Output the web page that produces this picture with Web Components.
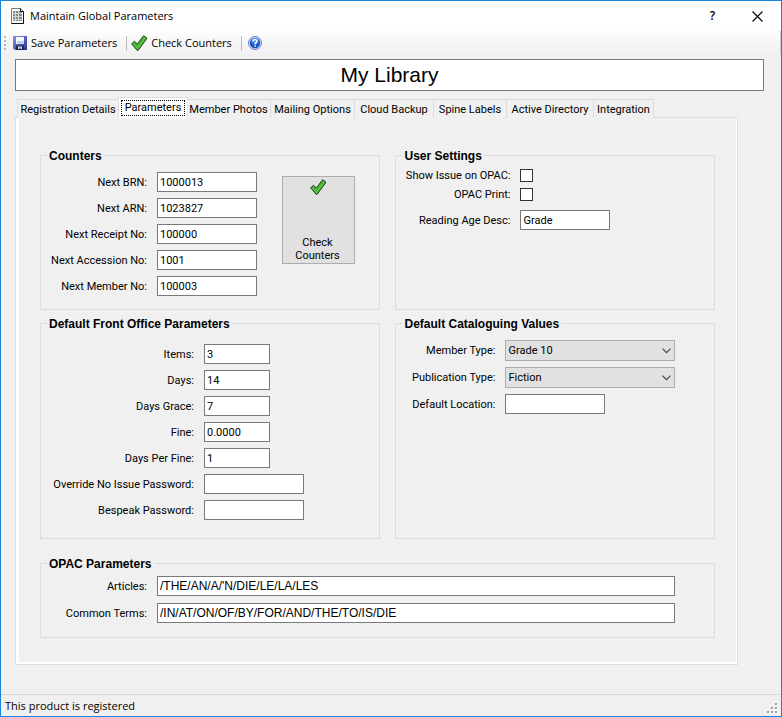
<!DOCTYPE html>
<html lang="en">
<head>
<meta charset="utf-8">
<title>Maintain Global Parameters</title>
<style>
html, body { margin: 0; }
body { font: 11px/13px Roboto, "Liberation Sans", Arial, sans-serif; color: #000; background: #f0f0f0; }
</style>
</head>
<body>
<app-window></app-window>

<template id="t-window">
<style>
:host { display: flex; flex-direction: column; min-height: 100vh; box-sizing: border-box; border: 1px solid #1883d7; background: #f0f0f0; }
.name { margin: 4px 17px 0 14px; border: 1px solid #7a7a7a; background: #fff; font: 400 21px/30px "Liberation Sans", Arial, sans-serif; text-align: center; }
main { margin: 6px 43px 0 14px; }
.panel { border: 1px solid #dcdcdc; background: #f0f0f0; box-shadow: inset 3px 0 #fff, inset -1px -2px #fff; padding: 29px 22px 26px 24px; }
.cols { display: grid; grid-template-columns: 341fr 320fr; column-gap: 15px; row-gap: 5px; }
.wide { margin-top: 16px; }
.counters { display: flex; gap: 25px; align-items: flex-start; }
.counters big-button { margin-top: 4px; }
.stack { display: grid; gap: 6px; justify-items: start; }
.roomy { gap: 7px; justify-items: stretch; }
</style>
<title-bar></title-bar>
<tool-bar></tool-bar>
<h1 class="name">My Library</h1>
<main>
<tab-strip></tab-strip>
<div class="panel">
<div class="cols">
<group-box heading="Counters" style="--inner:17px 0 13px">
  <div class="counters">
    <div class="stack" style="--label:106px;--field:100px">
      <text-field label="Next BRN:" value="1000013"></text-field>
      <text-field label="Next ARN:" value="1023827"></text-field>
      <text-field label="Next Receipt No:" value="100000"></text-field>
      <text-field label="Next Accession No:" value="1001"></text-field>
      <text-field label="Next Member No:" value="100003"></text-field>
    </div>
    <big-button></big-button>
  </div>
</group-box>
<group-box heading="User Settings" style="--inner:14px 0 13px">
  <div class="stack" style="--label:114px;--field:90px">
    <check-field label="Show Issue on OPAC:"></check-field>
    <check-field label="OPAC Print:"></check-field>
    <text-field label="Reading Age Desc:" value="Grade" style="margin-top:3px"></text-field>
  </div>
</group-box>
<group-box heading="Default Front Office Parameters" style="--inner:21px 0 18px">
  <div class="stack" style="--label:153px;--field:66px">
    <text-field label="Items:" value="3"></text-field>
    <text-field label="Days:" value="14"></text-field>
    <text-field label="Days Grace:" value="7"></text-field>
    <text-field label="Fine:" value="0.0000"></text-field>
    <text-field label="Days Per Fine:" value="1"></text-field>
    <text-field label="Override No Issue Password:" type="password" style="--field:100px"></text-field>
    <text-field label="Bespeak Password:" type="password" style="--field:100px"></text-field>
  </div>
</group-box>
<group-box heading="Default Cataloguing Values" style="--inner:17px 0 13px">
  <div class="stack" style="--label:99px;--field:100px">
    <select-field label="Member Type:" value="Grade 10"></select-field>
    <select-field label="Publication Type:" value="Fiction"></select-field>
    <text-field label="Default Location:"></text-field>
  </div>
</group-box>
</div>
<group-box class="wide" heading="OPAC Parameters" style="--inner:13px 39px 14px 0">
  <div class="stack roomy" style="--label:106px;--field:1fr;--value-font:12px 'Liberation Sans',Arial,sans-serif">
    <text-field label="Articles:" value="/THE/AN/A/'N/DIE/LE/LA/LES"></text-field>
    <text-field label="Common Terms:" value="/IN/AT/ON/OF/BY/FOR/AND/THE/TO/IS/DIE"></text-field>
  </div>
</group-box>
</div>
</main>
<status-bar>This product is registered</status-bar>
</template>

<template id="t-title">
<style>
:host { display: flex; align-items: center; height: 30px; background: #fff; padding: 0 1px 0 10px; font: 11px/16px "Open Sans", sans-serif; }
span { flex: 1; padding-left: 6px; }
button { width: 45px; height: 30px; padding: 0; border: 0; background: none; font: inherit; font-size: 12px; font-weight: 600; color: #000; }
svg { display: block; margin: auto; }
</style>
<svg width="13" height="16" viewBox="0 0 13 16" style="margin:0" aria-hidden="true">
<path d="M.5.5h9l3 3v12H.5z" fill="#fff" stroke="#777"/><path d="M9.500.5v3h3v12H.5" fill="none" stroke="#111"/>
<path d="M2 3h7v1h2v9H2z" fill="#8a8a8a"/>
<path d="M4.500 3v10M7.500 3v10M2 5.500h9M2 8.500h9M2 11.500h9" stroke="#d4d4d4" fill="none"/>
</svg>
<span>Maintain Global Parameters</span>
<button aria-label="Help">?</button>
<button aria-label="Close"><svg width="11" height="11" viewBox="0 0 11 11"><path d="M.5.5l10 10M10.500.5l-10 10" stroke="#000" stroke-width="1.100"/></svg></button>
</template>

<template id="t-tools">
<style>
:host { display: flex; align-items: center; height: 24px; padding-left: 3px; border-right: 1px solid #ccc; background: linear-gradient(#fdfdfd, #f0f0f0); font: 11px/16px "Open Sans", sans-serif; }
.grip { width: 2px; height: 14px; margin-right: 7px; background: repeating-linear-gradient(#b4b4b4 0 2px, transparent 2px 4px); }
button { display: flex; align-items: center; gap: 4px; height: 22px; padding: 0; border: 0; background: none; font: inherit; color: #000; }
.sep { width: 1px; height: 15px; background: #bdbdbd; margin: 0 4px 0 9px; }
.help { margin-left: 2px; }
</style>
<div class="grip"></div>
<button><svg width="14" height="14" viewBox="0 0 14 14" aria-hidden="true">
<defs><linearGradient id="f" x2="1" y2="1"><stop stop-color="#8a92e0"/><stop offset="1" stop-color="#2a2f90"/></linearGradient></defs>
<path d="M0 0h14v14H2L0 12.500z" fill="url(#f)"/><path d="M3 1h8v7H3z" fill="#f4f8ff"/><path d="M4 5h7v3H4z" fill="#bcd0ee"/><path d="M3 9.500h8V14H3z" fill="#20264c"/><path d="M5 10.500h4v2.500H7.500v-1.500h-1V13H5z" fill="#dde"/></svg><span>Save Parameters</span></button>
<div class="sep"></div>
<button><check-mark></check-mark><span>Check Counters</span></button>
<div class="sep"></div>
<button class="help" aria-label="Help"><svg width="14" height="14" viewBox="0 0 14 14" aria-hidden="true">
<defs><radialGradient id="h" cy=".3"><stop stop-color="#5a9cf5"/><stop offset="1" stop-color="#164fc0"/></radialGradient></defs>
<circle cx="7" cy="7" r="6.500" fill="#dce8fb" stroke="#5d7fc4"/><circle cx="7" cy="7" r="5.200" fill="url(#h)"/><path d="M5 5.500C5 3 9 3 9 5.300 9 6.600 7.100 6.800 7.100 8.200M7.100 9.200v1.500" fill="none" stroke="#fff" stroke-width="1.500"/></svg></button>
</template>

<template id="t-tabs">
<style>
:host { display: block; padding-left: 2px; margin-bottom: -1px; position: relative; }
div { display: grid; grid-template-columns: 102px 68px 84px 84px 79px 73px 87px 60px; align-items: end; height: 21px; }
button { height: 19px; padding: 0; border: 1px solid #dcdcdc; border-left-width: 0; border-bottom: 0; background: #f0f0f0; font: inherit; color: #000; white-space: nowrap; }
button:first-child { border-left-width: 1px; }
.on { height: 21px; background: #fff; padding: 2px; border-left-width: 1px; margin-left: -1px; margin-right: -1px; }
.on span { display: block; border: 1px dotted #000; line-height: 14px; }
</style>
<div role="tablist">
<button role="tab">Registration Details</button><button role="tab" class="on" aria-selected="true"><span>Parameters</span></button><button role="tab">Member Photos</button><button role="tab">Mailing Options</button><button role="tab">Cloud Backup</button><button role="tab">Spine Labels</button><button role="tab">Active Directory</button><button role="tab">Integration</button>
</div>
</template>

<template id="t-group">
<style>
:host { display: block; }
fieldset { margin: 0; min-width: 0; height: 100%; box-sizing: border-box; border: 1px solid #dcdcdc; padding: 0; }
legend { margin-left: 6px; padding: 2px 2px 0; font: 700 12px/14px "Liberation Sans", Arial, sans-serif; }
.in { padding: var(--inner); margin-top: -8px; }
</style>
<fieldset><legend></legend><div class="in"><slot></slot></div></fieldset>
</template>

<template id="t-field">
<style>
:host { display: grid; grid-template-columns: var(--label) var(--field); column-gap: 10px; align-items: center; }
label { text-align: right; white-space: nowrap; }
input { box-sizing: border-box; width: 100%; height: 20px; min-width: 0; margin: 0; padding: 0 2px; border: 1px solid #7a7a7a; border-radius: 0; background: #fff; font: var(--value-font, inherit); color: #000; }
</style>
<label for="c"></label><input id="c">
</template>

<template id="t-select">
<style>
:host { display: grid; grid-template-columns: var(--label) 170px; column-gap: 10px; align-items: center; }
label { text-align: right; white-space: nowrap; }
.box { display: grid; }
select, svg { grid-area: 1 / 1; }
select { appearance: none; height: 21px; margin: 0; padding: 0 2px; border: 1px solid #adadad; border-radius: 0; background: #e1e1e1; font: inherit; color: #000; }
svg { place-self: center end; margin-right: 4px; pointer-events: none; }
</style>
<label for="c"></label><div class="box"><select id="c"><option></option></select><svg width="9" height="6" viewBox="0 0 9 6"><path d="M.5.700l4 4 4-4" fill="none" stroke="#444" stroke-width="1.200"/></svg></div>
</template>

<template id="t-check">
<style>
:host { display: grid; grid-template-columns: var(--label) 13px; column-gap: 10px; align-items: center; }
label { text-align: right; white-space: nowrap; }
input { appearance: none; width: 13px; height: 13px; margin: 0; border: 1px solid #333; background: #fff; }
input:checked { background: #333; box-shadow: inset 0 0 0 2px #fff; }
</style>
<label for="c"></label><input id="c" type="checkbox">
</template>

<template id="t-big">
<style>
:host { display: block; }
button { display: flex; flex-direction: column; align-items: center; justify-content: space-between; width: 73px; height: 88px; padding: 2px 6px 1px 4px; border: 1px solid #adadad; background: #e1e1e1; font: inherit; color: #000; }
span { padding: 0 8px; }
</style>
<button><check-mark></check-mark><span>Check Counters</span></button>
</template>

<template id="t-mark">
<style>:host { display: block; } svg { display: block; }</style>
<svg width="16" height="16" viewBox="0 0 16 16" aria-hidden="true"><path d="M.6 8.800L3.600 6.200 6.300 9 12.600.700 15.500 2.700V4L7.300 15.200H6z" fill="#48b034" stroke="#1f4a1a" stroke-linejoin="round"/><path d="M2.200 8.900L6.500 13.200 14 3" fill="none" stroke="#6fce52" stroke-width=".9"/></svg>
</template>

<template id="t-status">
<style>
:host { display: flex; align-items: center; justify-content: space-between; height: 21px; margin-top: auto; margin-right: 1px; padding-left: 4px; border-top: 1px solid #d7d7d7; font: 11px/16px "Open Sans", sans-serif; }
svg { align-self: flex-end; margin: 0 2px 2px 0; }
</style>
<span><slot></slot></span>
<svg width="11" height="11" viewBox="0 0 11 11" aria-hidden="true"><path d="M9 1h2v2H9zM5 5h2v2H5zM9 5h2v2H9zM1 9h2v2H1zM5 9h2v2H5zM9 9h2v2H9z" fill="#fff"/><path d="M8 0h2v2H8zM4 4h2v2H4zM8 4h2v2H8zM0 8h2v2H0zM4 8h2v2H4zM8 8h2v2H8z" fill="#a0a0a0"/></svg>
</template>

<script>
class Base extends HTMLElement {
  connectedCallback() {
    if (this.shadowRoot) return;
    const root = this.attachShadow({ mode: "open" });
    root.append(document.getElementById(this.constructor.tpl).content.cloneNode(true));
    this.setup(root);
  }
  setup() {}
}
const plain = (tpl) => class extends Base { static tpl = tpl; };
class GroupBox extends Base {
  static tpl = "t-group";
  setup(root) { root.querySelector("legend").textContent = this.getAttribute("heading"); }
}
class TextField extends Base {
  static tpl = "t-field";
  setup(root) {
    root.querySelector("label").textContent = this.getAttribute("label");
    const input = root.querySelector("input");
    input.type = this.getAttribute("type") || "text";
    input.value = this.getAttribute("value") || "";
  }
}
class CheckField extends Base {
  static tpl = "t-check";
  setup(root) { root.querySelector("label").textContent = this.getAttribute("label"); }
}
class SelectField extends Base {
  static tpl = "t-select";
  setup(root) {
    root.querySelector("label").textContent = this.getAttribute("label");
    root.querySelector("option").textContent = this.getAttribute("value");
  }
}
customElements.define("check-mark", plain("t-mark"));
customElements.define("title-bar", plain("t-title"));
customElements.define("tool-bar", plain("t-tools"));
customElements.define("tab-strip", plain("t-tabs"));
customElements.define("big-button", plain("t-big"));
customElements.define("status-bar", plain("t-status"));
customElements.define("group-box", GroupBox);
customElements.define("text-field", TextField);
customElements.define("check-field", CheckField);
customElements.define("select-field", SelectField);
customElements.define("app-window", plain("t-window"));
</script>
</body>
</html>
